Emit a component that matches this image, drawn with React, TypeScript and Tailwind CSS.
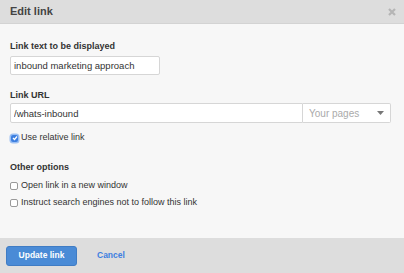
export default function App() {
  return (
    <div className="w-[404px] h-[273px] flex flex-col bg-[#f7f7f7] text-[#33475b] font-['Liberation_Sans',Arial,sans-serif] overflow-hidden">
      <header className="h-[24px] shrink-0 flex items-center justify-between pl-[10px] pr-[8px] bg-[#dddddd] border-b border-[#d3d3d3]">
        <h1 className="text-[11px] font-bold text-[#444]">Edit link</h1>
        <svg width="8" height="8" viewBox="0 0 8 8" className="text-[#b5b5b5]">
          <path d="M1 1L7 7M7 1L1 7" stroke="currentColor" strokeWidth="2.2" />
        </svg>
      </header>

      <main className="flex-1 px-[10px] pt-[16px]">
        <label className="block text-[9px] font-bold text-[#333] leading-[12px]">Link text to be displayed</label>
        <input
          className="mt-[4px] w-[150px] h-[19px] px-[3px] text-[9.5px] text-[#333] bg-white border border-[#d6d6d6] rounded-[2px] outline-none"
          defaultValue="inbound marketing approach"
        />

        <label className="block mt-[13px] text-[9px] font-bold text-[#333] leading-[12px]">Link URL</label>
        <div className="mt-[2px] flex w-[381px] h-[20px]">
          <input
            className="flex-1 h-full px-[3px] text-[9.5px] text-[#333] bg-white border border-[#d6d6d6] rounded-l-[2px] outline-none"
            defaultValue="/whats-inbound"
          />
          <div className="w-[88px] h-full flex items-center justify-between pl-[6px] pr-[6px] bg-white border border-l-0 border-[#d6d6d6] rounded-r-[2px]">
            <span className="text-[10px] text-[#aaa]">Your pages</span>
            <svg width="7" height="4" viewBox="0 0 7 4">
              <path d="M0 0H7L3.5 4Z" fill="#777" />
            </svg>
          </div>
        </div>

        <label className="mt-[9px] h-[12px] flex items-center gap-[3px] text-[9px] text-[#333]">
          <span className="w-[7px] h-[7px] ml-[1px] rounded-[2px] bg-[#3d7fe0] flex items-center justify-center shadow-[0_0_0_1.5px_#9cc0f3]">
            <svg width="6" height="6" viewBox="0 0 6 6">
              <path d="M1 3L2.5 4.5L5 1.5" stroke="white" strokeWidth="1.3" fill="none" />
            </svg>
          </span>
          Use relative link
        </label>

        <div className="mt-[17px] text-[9px] font-bold text-[#333] leading-[12px]">Other options</div>
        <label className="mt-[7px] h-[12px] flex items-center gap-[3px] text-[9px] text-[#333]">
          <span className="w-[8px] h-[8px] rounded-[2px] bg-white border border-[#999]" />
          Open link in a new window
        </label>
        <label className="mt-[5px] h-[12px] flex items-center gap-[3px] text-[9px] text-[#333]">
          <span className="w-[8px] h-[8px] rounded-[2px] bg-white border border-[#999]" />
          Instruct search engines not to follow this link
        </label>
      </main>

      <footer className="h-[35px] shrink-0 flex items-center gap-[20px] pl-[6px] bg-[#dddddd]">
        <button className="w-[71px] h-[20px] rounded-[3px] bg-[#4a8bd6] border border-[#3f7cc4] text-white text-[8.5px] font-bold">
          Update link
        </button>
        <button className="text-[8.5px] font-bold text-[#3d7fe0]">Cancel</button>
      </footer>
    </div>
  );
}
